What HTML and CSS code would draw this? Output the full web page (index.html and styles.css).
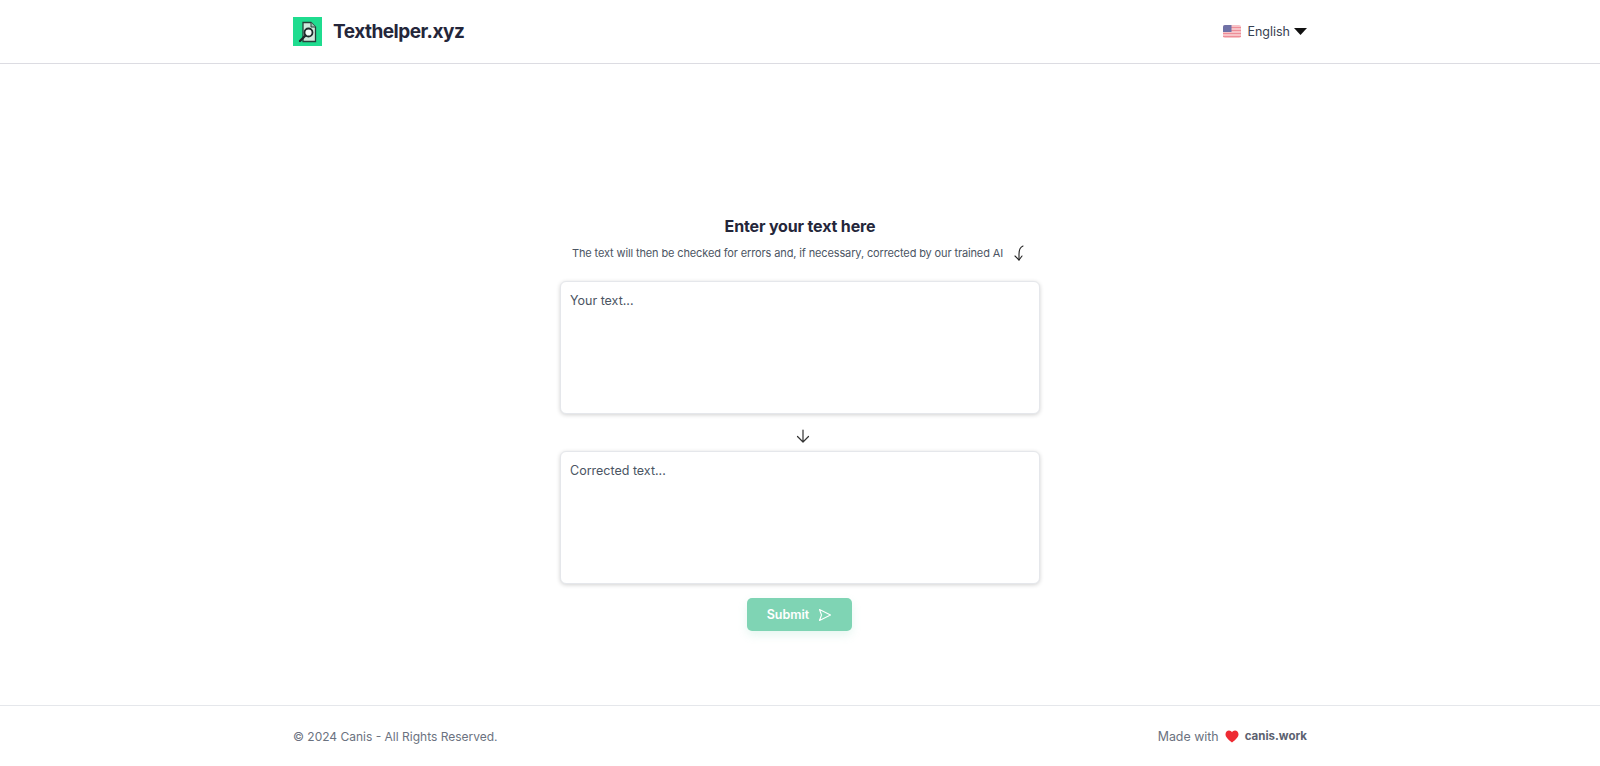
FILE: index.html
```html
<!DOCTYPE html>
<html lang="en">
<head>
<meta charset="utf-8">
<title>Texthelper.xyz</title>
<link rel="stylesheet" href="styles.css">
</head>
<body>
<div class="page">
  <header class="header">
    <div class="bar">
      <a class="brand">
        <span class="logo">
          <svg width="22" height="22" viewBox="0 0 22 22">
            <path d="M6 1.500h8l4.500 4.500v14.500H6z" fill="#cfe9dc" stroke="#27403a" stroke-width="1.300"/>
            <path d="M14 1.500v4.500h4.500" fill="#9fc9b6" stroke="#27403a" stroke-width="1"/>
            <circle cx="11.500" cy="11.500" r="4" fill="#f3fbf7" stroke="#1e2a2a" stroke-width="1.800"/>
            <path d="M8.500 14.500L3 20" stroke="#1e2a2a" stroke-width="2.400" stroke-linecap="round"/>
          </svg>
        </span>
        <span class="brand-name">Texthelper.xyz</span>
      </a>
      <div class="lang">
        <svg class="flag" width="18" height="13" viewBox="0 0 18 13">
          <rect width="18" height="13" rx="2" fill="#f7c3c7"/>
          <path d="M0 2.500h18M0 5.500h18M0 8.500h18M0 11.500h18" stroke="#ee8d98" stroke-width="1"/>
          <path d="M2 0h6.500v7H0V2a2 2 0 0 1 2-2z" fill="#6f71a6"/>
        </svg>
        <span class="lang-name">English</span>
        <svg width="13" height="7" viewBox="0 0 13 7"><path d="M0 0h13L6.500 7z" fill="#111"/></svg>
      </div>
    </div>
  </header>
  <main class="main">
    <h1 class="title">Enter your text here</h1>
    <p class="sub">The text will then be checked for errors and, if necessary, corrected by our trained AI
      <svg class="curl" width="12" height="16" viewBox="0 0 12 16" fill="none" stroke="#222" stroke-width="1.100" stroke-linecap="round" stroke-linejoin="round"><path d="M10 1C7.500 2 6 5 6 9v6"/><path d="M2 11l4 4 3-4"/></svg>
    </p>
    <textarea class="box" placeholder="Your text..."></textarea>
    <svg class="down" width="14" height="14" viewBox="0 0 14 14" fill="none" stroke="#333" stroke-width="1.200" stroke-linecap="round" stroke-linejoin="round"><path d="M7 1v12M1.500 7.500L7 13l5.500-5.500"/></svg>
    <textarea class="box" placeholder="Corrected text..."></textarea>
    <button class="submit">Submit
      <svg width="14" height="14" viewBox="0 0 14 14" fill="none" stroke="#fff" stroke-width="1.100" stroke-linejoin="round"><path d="M1.500 1.500l11 5.500-11 5.500 2-5.500z"/></svg>
    </button>
  </main>
  <footer class="footer">
    <div class="bar bar-foot">
      <span>© 2024 Canis - All Rights Reserved.</span>
      <span class="made">Made with
        <svg width="14" height="13" viewBox="0 0 14 13"><path d="M7 12.500C2.500 9 .5 6.800.5 4.200.5 2 2.200.5 4 .5c1.300 0 2.400.7 3 1.800C7.600 1.200 8.700.5 10 .5c1.800 0 3.500 1.500 3.500 3.700 0 2.600-2 4.800-6.500 8.300z" fill="#ee2b33"/></svg>
        <b class="site">canis.work</b>
      </span>
    </div>
  </footer>
</div>
</body>
</html>
```
FILE: styles.css
```css
* { box-sizing: border-box; }
html, body { margin: 0; height: 100%; }
body { background: #fff; font-family: "Inter", "Noto Sans", sans-serif; color: #1f2937; }
.page { height: 766px; display: flex; flex-direction: column; }
.header { height: 64px; border-bottom: 1px solid #dcdce2; display: flex; align-items: center; flex: none; }
.bar { width: 1014px; margin: 0 auto; display: flex; justify-content: space-between; align-items: center; }
.brand { display: flex; align-items: center; gap: 11px; }
.logo { width: 29px; height: 29px; background: #1fdc8f; display: flex; align-items: center; justify-content: center; }
.brand-name { font-size: 19px; font-weight: 700; letter-spacing: -.5px; color: #24263a; }
.lang { display: flex; align-items: center; font-size: 12.500px; color: #374151; }
.flag { margin-right: 6px; }
.lang-name { margin-right: 4px; }
.main { flex: 1; display: flex; flex-direction: column; align-items: center; padding-top: 152px; }
.title { margin: 0; font-size: 16px; line-height: 20px; font-weight: 700; letter-spacing: -.15px; color: #24263a; }
.sub { margin: 7px 3px 0 0; font-size: 11px; line-height: 16px; letter-spacing: -.13px; color: #4b5563; display: flex; align-items: center; gap: 10px; height: 19px; }
.box { display: block; width: 480px; height: 133px; margin-top: 19px; padding: 10px 9px; border: 1px solid #e5e7eb; border-radius: 6px; background: #fff; font: 12.500px/18px "Inter", sans-serif; color: #4b5563; resize: none; outline: none; box-shadow: 0 1px 4px rgba(0,0,0,.18); }
.box::placeholder { color: #4b5563; opacity: 1; }
.down { margin-top: 15px; margin-bottom: -11px; margin-left: 6px; flex: none; }
.submit { margin: 14px 1px 0 0; width: 105px; height: 33px; border: 0; border-radius: 5px; background: #7fd4b4; color: #fff; font: 600 12.500px "Inter", sans-serif; display: flex; align-items: center; justify-content: center; gap: 9px; box-shadow: 0 4px 10px rgba(127,212,180,.2); }
.footer { height: 61px; border-top: 1px solid #e5e7eb; flex: none; display: flex; align-items: center; font-size: 12px; color: #6b7280; }
.made { display: flex; align-items: center; gap: 6px; font-size: 12.400px; }
.site { font-weight: 700; font-size: 11.500px; color: #5b6170; }
```
